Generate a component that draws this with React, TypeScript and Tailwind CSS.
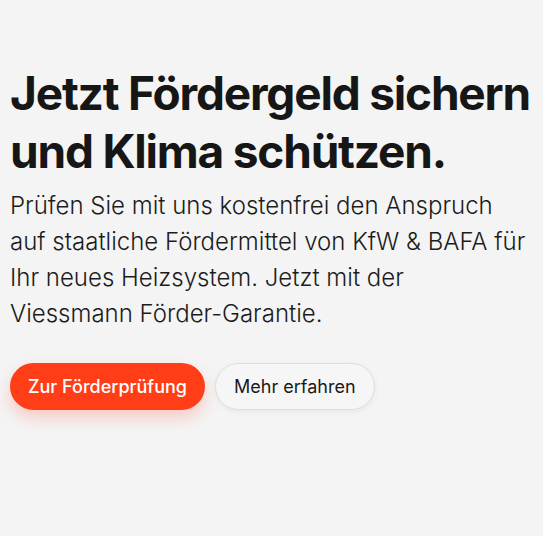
export default function App() {
  return (
    <div className="min-h-[536px] w-full bg-[#f4f4f4] text-[#141414]" style={{ fontFamily: "Inter, 'Noto Sans', sans-serif" }}>
      <div className="pl-[10px] pr-2 pt-[64px]">
        <h1 className="text-[46px] font-bold leading-[58px] tracking-[-0.026em] text-[#161616]">
          Jetzt Fördergeld sichern und Klima schützen.
        </h1>
        <p className="mt-[8px] max-w-[520px] text-[24px] font-light leading-[36px] text-[#1c1c1c]">
          Prüfen Sie mit uns kostenfrei den Anspruch auf staatliche Fördermittel von KfW &amp; BAFA für Ihr neues Heizsystem. Jetzt mit der Viessmann Förder-Garantie.
        </p>
        <div className="mt-[31px] flex items-center gap-[10px]">
          <button className="h-[47px] rounded-full bg-[#ff3d17] px-[18px] text-[18px] font-medium text-white shadow-[0_8px_16px_rgba(255,61,23,0.22)]">
            Zur Förderprüfung
          </button>
          <button className="h-[47px] rounded-full border border-[#dedede] bg-[#f6f6f6] px-[18px] text-[18px] font-normal text-[#1a1a1a] shadow-[0_2px_6px_rgba(0,0,0,0.06)]">
            Mehr erfahren
          </button>
        </div>
      </div>
    </div>
  );
}
